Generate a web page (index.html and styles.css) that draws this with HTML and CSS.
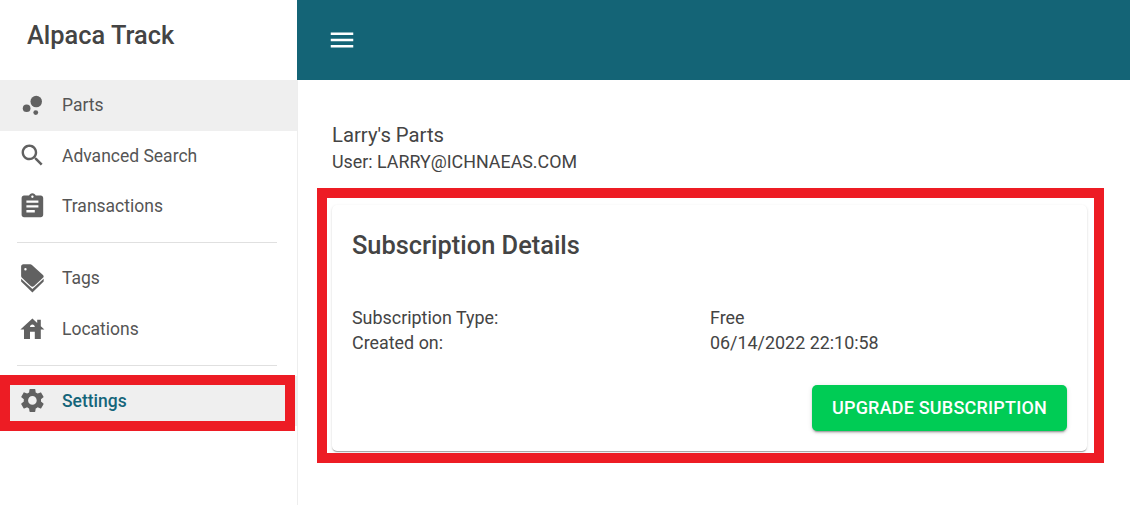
FILE: index.html
```html
<!DOCTYPE html>
<html lang="en">
<head>
<meta charset="utf-8">
<title>Alpaca Track</title>
<link rel="stylesheet" href="styles.css">
</head>
<body>
<div class="app">
  <aside class="sidebar">
    <div class="brand">Alpaca Track</div>
    <nav class="nav">
      <a class="item active">
        <svg class="icon" viewBox="0 0 24 24"><circle cx="7.2" cy="14.4" r="3.2"/><circle cx="14.8" cy="18" r="2"/><circle cx="15.2" cy="8.8" r="4.8"/></svg>
        <span>Parts</span>
      </a>
      <a class="item">
        <svg class="icon" viewBox="0 0 24 24"><path d="M15.5 14h-.79l-.28-.27C15.41 12.59 16 11.11 16 9.5 16 5.91 13.09 3 9.5 3S3 5.91 3 9.5 5.91 16 9.5 16c1.61 0 3.09-.59 4.23-1.57l.27.28v.79l5 4.99L20.49 19l-4.99-5zm-6 0C7.01 14 5 11.99 5 9.5S7.01 5 9.5 5 14 7.01 14 9.5 11.99 14 9.5 14z"/></svg>
        <span>Advanced Search</span>
      </a>
      <a class="item">
        <svg class="icon" viewBox="0 0 24 24"><path d="M19 3h-4.18C14.4 1.84 13.3 1 12 1c-1.3 0-2.4.84-2.82 2H5c-1.1 0-2 .9-2 2v14c0 1.1.9 2 2 2h14c1.1 0 2-.9 2-2V5c0-1.1-.9-2-2-2zm-7 0c.55 0 1 .45 1 1s-.45 1-1 1-1-.45-1-1 .45-1 1-1zm2 14H7v-2h7v2zm3-4H7v-2h10v2zm0-4H7V7h10v2z"/></svg>
        <span>Transactions</span>
      </a>
      <hr class="divider">
      <a class="item">
        <svg class="icon" viewBox="0 0 24 24"><path fill-rule="evenodd" d="M4.4.3H10.2c.5 0 1 .2 1.400.6l9.200 8.200c.8.7.8 1.700 0 2.400l-7.400 6.900c-.8.7-2 .7-2.800 0l-7.300-6.900c-.4-.4-.7-.9-.7-1.400V2.100c0-1 .8-1.800 1.800-1.800zM6.200 3.400a1 1 0 1 0 0 2 1 1 0 0 0 0-2z"/><path d="M2.600 12.200 12 20.900l9.400-8.700v2.400L12 23.800l-9.400-9.200z"/></svg>
        <span>Tags</span>
      </a>
      <a class="item">
        <svg class="icon" viewBox="0 0 24 24"><path d="M19 9.300V4h-3v2.600L12 3 2 12h3v8h5v-6h4v6h5v-8h3l-3-2.700zm-9 .7c0-1.100.9-2 2-2s2 .9 2 2h-4z"/></svg>
        <span>Locations</span>
      </a>
      <hr class="divider">
      <a class="item current">
        <svg class="icon" viewBox="0 0 24 24"><path d="M19.140 12.940c.04-.3.06-.61.06-.94 0-.32-.02-.64-.07-.94l2.030-1.580a.49.49 0 0 0 .12-.61l-1.920-3.320a.488.488 0 0 0-.59-.22l-2.390.96c-.5-.38-1.030-.7-1.620-.94l-.36-2.540a.484.484 0 0 0-.48-.41h-3.840c-.24 0-.43.17-.47.41l-.36 2.540c-.59.24-1.130.57-1.620.94l-2.390-.96c-.22-.08-.47 0-.59.22L2.740 8.870c-.12.21-.08.47.12.61l2.030 1.580c-.05.3-.09.63-.09.94s.02.64.07.94l-2.030 1.580a.49.49 0 0 0-.12.61l1.920 3.320c.12.22.37.29.59.22l2.390-.96c.5.38 1.030.7 1.620.94l.36 2.540c.05.24.24.41.48.41h3.840c.24 0 .44-.17.47-.41l.36-2.540c.59-.24 1.130-.56 1.620-.94l2.390.96c.22.08.47 0 .59-.22l1.920-3.320c.12-.22.07-.47-.12-.61l-2.010-1.580zM12 15.600c-1.980 0-3.600-1.620-3.600-3.600s1.620-3.600 3.600-3.600 3.600 1.620 3.600 3.600-1.620 3.600-3.600 3.600z"/></svg>
        <span>Settings</span>
      </a>
    </nav>
    <div class="mark mark-nav"></div>
  </aside>
  <div class="main">
    <header class="topbar">
      <svg class="menu" viewBox="0 0 24 24"><path d="M3 18h18v-2H3v2zm0-5h18v-2H3v2zm0-7v2h18V6H3z"/></svg>
    </header>
    <main class="content">
      <div class="org">Larry's Parts</div>
      <div class="user">User: LARRY@ICHNAEAS.COM</div>
      <section class="card">
        <h2 class="card-title">Subscription Details</h2>
        <dl class="details">
          <dt>Subscription Type:</dt><dd>Free</dd>
          <dt>Created on:</dt><dd>06/14/2022 22:10:58</dd>
        </dl>
        <div class="actions"><button class="upgrade">Upgrade Subscription</button></div>
        <div class="mark mark-card"></div>
      </section>
    </main>
  </div>
</div>
</body>
</html>
```

FILE: styles.css
```css
* { box-sizing: border-box; }
html, body { margin: 0; height: 100%; overflow: hidden; }
body { font-family: Roboto, "Liberation Sans", sans-serif; color: #444; background: #fff; }
.app { display: flex; height: 505px; }
.sidebar { width: 297px; flex: none; box-shadow: 1px 0 0 #eee; }
.brand { height: 80px; padding: 20px 0 0 27px; font-size: 25.4px; line-height: 30px; font-weight: 500; color: #444; }
.nav { display: flex; flex-direction: column; }
.item { display: flex; align-items: center; height: 50.6px; padding-left: 17.6px; font-size: 17.5px; color: #555; }
.item span { margin-left: 15.6px; position: relative; top: -0.3px; }
.item.active, .item.current { background: #efefef; }
.item.current { color: #14657a; font-weight: 500; }
.icon { width: 28.8px; height: 28.8px; fill: #616161; flex: none; }
.divider { width: 260px; margin: 10.5px 0 9.8px 17px; height: 1px; border: 0; background: #e0e0e0; }
.main { flex: 1; min-width: 0; display: flex; flex-direction: column; }
.topbar { height: 80px; flex: none; display: flex; align-items: center; padding-left: 30px; background: #146476; }
.menu { width: 30px; height: 30px; fill: #fff; }
.content { padding: 43px 43px 0 35px; }
.org { font-size: 20.3px; line-height: 24px; color: #444; }
.user { margin-top: 4px; font-size: 17.85px; line-height: 22px; color: #444; }
.card { position: relative; margin-top: 32px; padding: 20px; border-radius: 5px; box-shadow: 0 2px 1px -1px rgba(0,0,0,.2), 0 1px 1px 0 rgba(0,0,0,.14), 0 1px 3px 0 rgba(0,0,0,.12); background: #fff; }
.card-title { margin: 0; font-size: 25.4px; line-height: 40px; font-weight: 500; color: #444; }
.details { display: grid; grid-template-columns: 358px 1fr; margin: 40px 0 0; font-size: 17.9px; line-height: 25px; color: #444; }
.details dt, .details dd { margin: 0; }
.actions { display: flex; justify-content: flex-end; margin-top: 30px; }
.upgrade { height: 46px; width: 255px; padding: 0 0 2px; border: 0; border-radius: 5px; background: #00cc55; color: #fff; font: 500 18px Roboto, sans-serif; text-transform: uppercase; letter-spacing: .2px; box-shadow: 0 3px 1px -2px rgba(0,0,0,.2), 0 2px 2px 0 rgba(0,0,0,.14), 0 1px 5px 0 rgba(0,0,0,.12); }
.mark { position: absolute; border: 10px solid #ed1c24; pointer-events: none; }
.mark-nav { left: 0; top: 375px; width: 295px; height: 56px; }
.mark-card { left: -15px; top: -17px; width: 787px; height: 275px; }
```
